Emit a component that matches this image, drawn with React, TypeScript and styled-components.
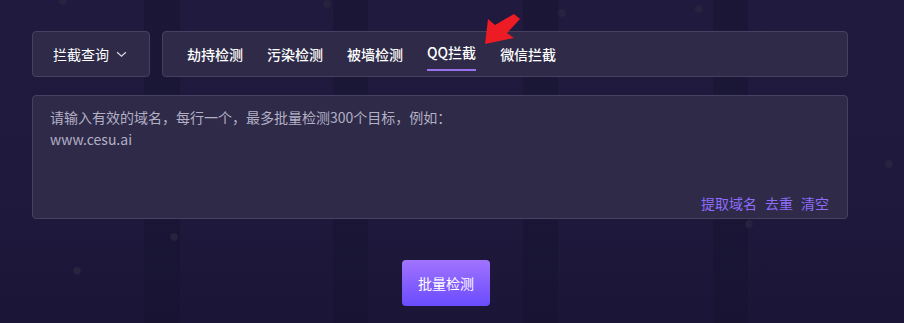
import styled, { createGlobalStyle } from 'styled-components';

const GlobalStyle = createGlobalStyle`
  html, body {
    margin: 0;
    padding: 0;
  }
  body {
    font-family: 'Noto Sans CJK SC', 'Noto Sans', sans-serif;
    background: #1d1939;
  }
`;

const tabs = ['劫持检测', '污染检测', '被墙检测', 'QQ拦截', '微信拦截'];
const activeTab = 'QQ拦截';

const App = () => {
  return (
    <Page>
      <GlobalStyle />
      <Content>
        <TopRow>
          <Dropdown>
            拦截查询
            <Chevron viewBox='0 0 12 8'>
              <path d='M1 1.5 L6 6 L11 1.5' />
            </Chevron>
          </Dropdown>
          <TabBar>
            {tabs.map((t) => (
              <Tab key={t} $active={t === activeTab}>
                {t}
              </Tab>
            ))}
          </TabBar>
        </TopRow>
        <InputBox>
          <Placeholder>
            请输入有效的域名，每行一个，最多批量检测300个目标，例如：
            <br />
            www.cesu.ai
          </Placeholder>
          <Actions>
            <ActionLink>提取域名</ActionLink>
            <ActionLink>去重</ActionLink>
            <ActionLink>清空</ActionLink>
          </Actions>
        </InputBox>
        <ButtonRow>
          <SubmitButton>批量检测</SubmitButton>
        </ButtonRow>
      </Content>
      <Arrow viewBox='0 0 37 32'>
        <polygon points='1,31 4,6 11,12 30,1 36,6 23,20 30,25' />
      </Arrow>
    </Page>
  );
};

const Page = styled.div`
  position: relative;
  width: 904px;
  height: 323px;
  overflow: hidden;
  background:
    radial-gradient(circle at 63px 1px, #28243f 3px, transparent 4.5px),
    radial-gradient(circle at 327px 4px, #27233f 3px, transparent 4.5px),
    radial-gradient(circle at 562px 13px, #27233f 3px, transparent 4.5px),
    radial-gradient(circle at 699px 9px, #27233f 3px, transparent 4.5px),
    radial-gradient(circle at 889px 164px, #28243f 3px, transparent 4.5px),
    radial-gradient(circle at 749px 224px, #27233f 3px, transparent 4.5px),
    radial-gradient(circle at 174px 237px, #27233f 3px, transparent 4.5px),
    radial-gradient(circle at 77px 271px, #28243f 3px, transparent 4.5px),
    linear-gradient(90deg,
      transparent 0 144px, rgba(18, 14, 40, 0.35) 144px 180px,
      transparent 180px 333px, rgba(18, 14, 40, 0.35) 333px 368px,
      transparent 368px 523px, rgba(18, 14, 40, 0.35) 523px 558px,
      transparent 558px 713px, rgba(18, 14, 40, 0.35) 713px 748px,
      transparent 748px),
    linear-gradient(180deg, #201b3e 0%, #1f1a3d 60%, #1b1637 100%);
`;

const Content = styled.div`
  width: 816px;
  padding: 31px 0 0 32px;
  display: flex;
  flex-direction: column;
`;

const TopRow = styled.div`
  display: flex;
  gap: 12px;
`;

const Panel = styled.div`
  box-sizing: border-box;
  background: #2e2a48;
  border: 1px solid #45415f;
  border-radius: 4px;
`;

const Dropdown = styled(Panel)`
  width: 118px;
  height: 46px;
  display: flex;
  align-items: center;
  justify-content: center;
  gap: 7px;
  color: #ffffff;
  font-size: 14px;
  padding-right: 2px;
`;

const Chevron = styled.svg`
  width: 11px;
  height: 7px;
  fill: none;
  stroke: #d8d6e6;
  stroke-width: 1.4;
`;

const TabBar = styled(Panel)`
  flex: 1;
  height: 46px;
  display: flex;
  align-items: stretch;
  gap: 24px;
  padding: 0 24px;
`;

const Tab = styled.div<{ $active?: boolean }>`
  display: flex;
  align-items: center;
  font-size: 14px;
  font-weight: 500;
  color: #ffffff;
  box-sizing: border-box;
  padding-top: ${({ $active }) => ($active ? '2px' : '0')};
  border-bottom: ${({ $active }) => ($active ? '2px solid #9a72f0' : 'none')};
  margin-bottom: ${({ $active }) => ($active ? '5px' : '0')};
  height: ${({ $active }) => ($active ? '39px' : 'auto')};
`;

const InputBox = styled(Panel)`
  margin-top: 18px;
  height: 124px;
  display: flex;
  flex-direction: column;
  justify-content: space-between;
  padding: 10px 18px 5px 17px;
`;

const Placeholder = styled.div`
  font-size: 14px;
  line-height: 22px;
  color: #b3b0c6;
`;

const Actions = styled.div`
  display: flex;
  justify-content: flex-end;
  gap: 8px;
`;

const ActionLink = styled.span`
  font-size: 14px;
  line-height: 20px;
  color: #8d6dfa;
  cursor: pointer;
`;

const ButtonRow = styled.div`
  display: flex;
  justify-content: center;
  padding-left: 12px;
  margin-top: 41px;
`;

const SubmitButton = styled.button`
  width: 88px;
  height: 46px;
  border: none;
  border-radius: 4px;
  background: linear-gradient(180deg, #a173fe 0%, #6a4cfe 100%);
  color: #ffffff;
  font-family: inherit;
  font-size: 14px;
  cursor: pointer;
`;

const Arrow = styled.svg`
  position: absolute;
  left: 484px;
  top: 13px;
  width: 37px;
  height: 32px;
  fill: #ec1b24;
`;

export default App;
